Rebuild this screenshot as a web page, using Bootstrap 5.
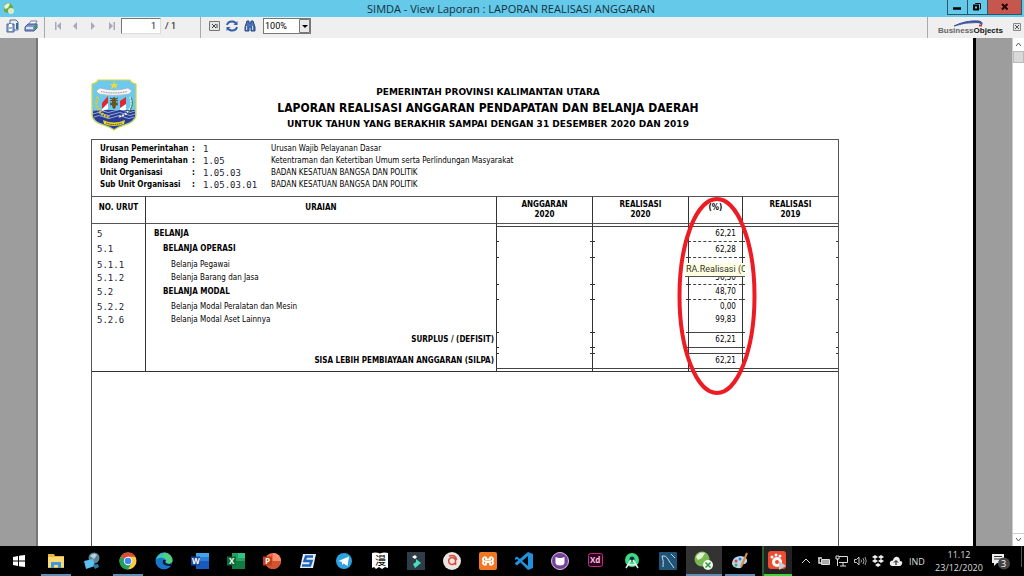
<!DOCTYPE html>
<html lang="id">
<head>
<meta charset="utf-8">
<meta name="viewport" content="width=device-width, initial-scale=1">
<title>SIMDA - View Laporan</title>
<link href="https://cdn.jsdelivr.net/npm/bootstrap@5.3.0/dist/css/bootstrap.min.css" rel="stylesheet">
<style>
body{font-family:"Open Sans","Noto Sans",sans-serif;background:#9d9d9d;color:#000;font-size:12px;line-height:16px}
button{border:0;background:none;padding:0}
svg{display:block}
.titlebar{height:17px;background:#65c9ea;color:#12303b}
.titlebar h1{font-size:11px;line-height:17px;margin:0;font-weight:400;padding-left:60px}
.win-btns{height:15px;border:1px solid #2b5868;border-top:0;margin-right:2px}
.win-btns button{width:20px;height:14px;border-right:1px solid #2b5868}
.win-btns .btn-x{width:33px;background:#c5574f;border-right:0}
.tools{height:21px;background:#efefef}
.tool-row{height:18px}
.vsep{width:1px;height:21px;background:#a9a9a9;align-self:flex-start}
.tools button{width:18px;height:18px}
.tools .btn-close-view{width:12px}
.page-input{width:40px;height:16px;border:1px solid #777;border-right-color:#ddd;border-bottom-color:#ddd;text-align:right;font:9px/14px Roboto,sans-serif;padding:0 4px;background:#fff;color:#223}
.tool-text{font:9px/16px Roboto,sans-serif}
.zoom-box{width:48px;height:16px}
.zoom-box select{display:block;width:48px;height:16px;appearance:none;border:1px solid #777;border-radius:0;font:9px/14px Roboto,sans-serif;padding:0 1px;background:#fff;color:#000}
.zoom-box svg{position:absolute;right:1px;top:1px;pointer-events:none}
.gutter-l{width:38px;border-right:2px solid #777;background:#9d9d9d}
.gutter-r{width:39px;border-left:3px solid #000;background:#9d9d9d}
.vscroll{width:12px;background:#fff;border-left:1px solid #ccc}
.vscroll .thumb{height:12px;background:#d9d9d9;border:1px solid #bbb}
.vscroll button{height:13px;width:100%}
.sheet{background:#fff;padding:41px 134px 0 53px;font-family:"DejaVu Sans Condensed","DejaVu Sans",sans-serif}
.report-head{height:60px}
.crest{width:46px}
.head-text{padding-top:5px;font-weight:700;line-height:16px}
.head-s{font-family:"DejaVu Sans",sans-serif;font-size:9px}
.head-l{font-size:12px}
.frame{border:1px solid #555;border-bottom:0}
.info{height:56px;padding:3px 0 0 8px;font-size:8px}
.info th,.info td{height:12px;line-height:12px;padding:0;white-space:nowrap;vertical-align:top}
.code{font-family:"DejaVu Sans Mono",monospace;font-size:9px;color:#223}
.ledger{width:100%;table-layout:fixed;border-collapse:separate;border-spacing:0;font-size:8px;line-height:10px}
.ledger th,.ledger td{padding:0;border-left:1px solid #333;vertical-align:middle}
.ledger th:first-child,.ledger td:first-child{border-left:0;padding-left:5px}
.ledger thead th{height:28px;border-top:1px solid #555;border-bottom:1px solid #555;text-align:center;vertical-align:top;padding-top:3px}
.ledger thead .one-line{padding:6px 0 0}
.ledger td.num{text-align:right;padding-right:6px}
.ledger td.sum{text-align:right;font-weight:700;padding-right:2px}
.ledger .h2r{height:2px;line-height:1px;font-size:1px}
.ledger .h4r{height:4px;line-height:1px;font-size:1px}
.ledger .h6r{height:6px;line-height:1px;font-size:1px}
.ledger .h12{height:12px}
.ledger .h15{height:15px}
.ledger .h16{height:16px}
.ledger td.lv1{padding-left:8px;font-weight:700}
.ledger td.lv2{padding-left:17px;font-weight:700}
.ledger td.lv3{padding-left:25px}
.ledger td.dash{border-top:1px dashed #444}
.ledger td.rule{border-top:1px solid #444}
.ledger td.tick{background:linear-gradient(#333,#333) left top/2px 1px no-repeat,linear-gradient(#333,#333) right top/2px 1px no-repeat}
.ledger tbody tr:last-child td{border-bottom:1px solid #333}
.ring{position:absolute;left:-13px;top:-1px;z-index:3;pointer-events:none}
.tip{position:absolute;left:-4px;top:-9px;width:60px;height:14px;padding-left:1px;overflow:hidden;background:#ffffe1;border-bottom:1px solid #555;font:9px/13px Roboto,sans-serif;white-space:nowrap;text-align:left;z-index:2;color:#333}
.taskbar{height:30px;background:#000;color:#ddd}
.app{width:36px;height:30px;position:relative;display:flex;flex-shrink:0;align-items:center;justify-content:center}
.app.start{width:38px}
.app.run::after{content:"";position:absolute;left:3px;right:3px;bottom:0;height:2px;background:#5c8db5}
.app.front{background:#333}
.app.front::after{left:0;right:0}
.app.rec{background:#222;border-left:2px solid #275d27;width:30px;margin-left:4px}
.app.rec::after{left:0;right:0;background:#3fd136}
.tray{font-size:9px;line-height:13px;padding-right:2px}
.tray button{height:30px;display:flex;align-items:center;justify-content:center;color:#ddd}
.t18{width:18px}
.clock{width:60px;text-align:center}
.note{width:24px}
</style>
</head>
<body class="vh-100 d-flex flex-column overflow-hidden">
<header class="titlebar d-flex justify-content-between flex-shrink-0">
  <svg class="ms-1" width="11" height="17" viewBox="0 0 11 17"><circle cx="4" cy="8" r="5" fill="#6da84b"/><path d="M0 6Q3 2 6 4L4 8 1 9Z" fill="#e8f5d0"/><circle cx="7" cy="11" r="3" fill="#d7eec9"/></svg>
  <h1 class="flex-fill text-center">SIMDA - View Laporan : LAPORAN REALISASI ANGGARAN</h1>
  <div class="win-btns d-flex">
    <button aria-label="Minimize"><svg width="19" height="14"><path d="M5 8.500H13" stroke="#000" stroke-width="2.500"/></svg></button>
    <button aria-label="Restore"><svg width="19" height="14" fill="none" stroke="#000"><path d="M7.500 4V3.500H12.500V9H11.500" stroke-width="1"/><path d="M6 5.500h4v4H6z" stroke-width="2"/></svg></button>
    <button class="btn-x" aria-label="Close"><svg width="33" height="14"><path d="M14 4L19.500 9.500M19.500 4L14 9.500" stroke="#200" stroke-width="2"/></svg></button>
  </div>
</header>
<nav class="tools flex-shrink-0" aria-label="Laporan">
 <div class="tool-row d-flex align-items-center">
  <button class="ms-1" aria-label="Export"><svg width="18" height="18" viewBox="0 0 18 18"><path d="M6 3h6l2 2v8H6z" fill="#e9effa" stroke="#5a6c90"/><path d="M3 7h7v8H3z" fill="#9db5dc" stroke="#43608f"/><path d="M5 7h3v3H5zM5 12h3v2H5z" fill="#fff"/><path d="M12 6h2v6h-2z" fill="#2f6f9c"/></svg></button>
  <button aria-label="Print"><svg width="18" height="18" viewBox="0 0 18 18"><path d="M6 8l3-4h6l-2 4z" fill="#fff" stroke="#6d7fae"/><path d="M3 10l3-3h9v4l-3 3H3z" fill="#7e95cf" stroke="#42568f"/><path d="M4 10h7v2H4z" fill="#dfe6f6"/><path d="M12 9l2-1v3l-2 2z" fill="#36a34e"/></svg></button>
  <span class="vsep ms-1"></span>
  <button class="ms-1" aria-label="First page"><svg width="18" height="18" fill="#a7a7bd"><path d="M6 5h1.500v8H6zM12 5v8L8 9z"/></svg></button>
  <button aria-label="Previous page"><svg width="18" height="18" fill="#a7a7bd"><path d="M10 5v8L6 9z"/></svg></button>
  <button aria-label="Next page"><svg width="18" height="18" fill="#a7a7bd"><path d="M6 5v8l4-4z"/></svg></button>
  <button aria-label="Last page"><svg width="18" height="18" fill="#a7a7bd"><path d="M6 5v8l4-4zM10.500 5H12v8h-1.500z"/></svg></button>
  <input id="pg" class="page-input" aria-label="Halaman" value="1">
  <label for="pg" class="tool-text ms-1">/ 1</label>
  <span class="vsep ms-4"></span>
  <button class="ms-1" aria-label="Stop"><svg width="18" height="18" fill="none"><path d="M4.500 4.500h10v9h-10z" fill="#e4e4e4" stroke="#777"/><path d="M7 7l4 4M11 7l-4 4M12 7v4" stroke="#444"/></svg></button>
  <button aria-label="Refresh"><svg width="18" height="18" fill="none" stroke="#365fa5" stroke-width="2"><path d="M4 8Q5 4 10 4.500L13 6M14 10Q13 14 8 13.500L5 12"/><path d="M14.500 4v4h-4zM3.500 14v-4h4z" fill="#365fa5" stroke="none"/></svg></button>
  <button aria-label="Search"><svg width="18" height="18" viewBox="0 0 18 18"><path d="M6 4h2v2h2V4h2l2 6v4h-4v-4H8v4H4v-4z" fill="#4f73b3" stroke="#244a89"/><path d="M5.500 9v4M11.500 9v4" stroke="#c3d6f4"/></svg></button>
  <div class="zoom-box position-relative ms-1"><select aria-label="Zoom"><option>100%</option></select><svg width="11" height="14"><path d="M.5 .5h10v13H.5z" fill="#e9e9e9" stroke="#777"/><path d="M3 6h6L6 9z"/></svg></div>
  <div class="ms-auto d-flex align-items-center align-self-stretch">
    <span class="vsep"></span>
    <svg class="ms-2" width="68" height="18" viewBox="0 2 68 18" role="img" aria-label="BusinessObjects"><path d="M18 11Q30 5 43 6Q48 7 45 11Q47 8 41 7.500Q29 7 18 11Z" fill="#3b56a0" stroke="#3b56a0"/><path d="M43 10.500h3" stroke="#d33" stroke-width="2"/><text x="2" y="18" font-family="Liberation Sans" font-weight="700" font-size="8" fill="#666">Business<tspan fill="#111">Objects</tspan></text></svg>
    <button class="btn-close-view ms-2" aria-label="Close view"><svg width="12" height="18" fill="none"><path d="M1.500 6.500h7v7h-7z" fill="#e4e4e4" stroke="#888"/><path d="M3 8l4 4M7 8l-4 4" stroke="#555"/></svg></button>
  </div>
 </div>
</nav>
<main class="d-flex flex-fill overflow-hidden">
  <div class="gutter-l flex-shrink-0"></div>
  <section class="sheet flex-fill d-flex flex-column">
    <div class="report-head d-flex flex-shrink-0">
      <svg class="crest" height="54" viewBox="0 0 46 54" role="img" aria-label="Kalimantan Utara"><path d="M7 1H39Q40 4 45 5V37Q44 43 34 46Q27 48 23 51Q19 48 12 46Q2 43 1 37V5Q6 4 7 1Z" fill="#6cc9ef" stroke="#d8d437" stroke-width="1.200"/><path d="M2 31H44V37Q43 42 34 45Q27 47 23 50Q19 47 12 45Q3 42 2 37Z" fill="#2b3a92"/><path d="M2 32q5-3 10 0t11 0 11 0 10 0M2 35q5-3 10 0t11 0 11 0 10 0M3 38q5-3 10 0t10 0 10 0 10 0" fill="none" stroke="#a9c4ec" stroke-width=".8"/><path d="M23 2l1 3h3l-2 2 1 3-3-2-3 2 1-3-2-2h3z" fill="#f0d930"/><path d="M5 12L9 9Q23 13 37 9L41 12 38 15Q23 18 8 15Z" fill="#f6f6f6" stroke="#99a" stroke-width=".5"/><path d="M10 12.500Q23 15.500 36 12.500" fill="none" stroke="#777" stroke-dasharray="1 .7"/><path d="M7 18Q3 26 10 34Q14 38 19 38" fill="none" stroke="#d6c93b" stroke-width="3" stroke-dasharray="2 1"/><path d="M39 18Q43 26 36 34Q32 37 27 38" fill="none" stroke="#e9efe0" stroke-width="2" stroke-dasharray="2 1"/><path d="M40 18Q44 26 37 34" fill="none" stroke="#388350"/><path d="M11 24l6-7v8l-6 6zM29 22l6-4v8l-6 4z" fill="#e02733"/><path d="M11 30l6-6v6l-6 2zM29 29l6-4v6h-6z" fill="#fff"/><path d="M19 19l8 3M27 19l-8 3M19 26l8-2M19 24l8 2" stroke="#55421c"/><ellipse cx="23" cy="24" rx="2.200" ry="6" fill="#6b541c"/><path d="M12 41Q23 46 34 41L33 45Q23 49 13 45Z" fill="#e9d72d"/><path d="M15 44Q23 47 31 44" fill="none" stroke="#443" stroke-dasharray="1.500 .7"/></svg>
      <div class="head-text flex-fill text-center">
        <div class="head-s">PEMERINTAH PROVINSI KALIMANTAN UTARA</div>
        <div class="head-l">LAPORAN REALISASI ANGGARAN PENDAPATAN DAN BELANJA DAERAH</div>
        <div class="head-s">UNTUK TAHUN YANG BERAKHIR SAMPAI DENGAN 31 DESEMBER 2020 DAN 2019</div>
      </div>
    </div>
    <div class="frame flex-fill">
      <div class="info">
        <table>
          <colgroup><col style="width:92px"><col style="width:11px"><col style="width:68px"><col></colgroup>
          <tr><th>Urusan Pemerintahan</th><th>:</th><td class="code">1</td><td>Urusan Wajib Pelayanan Dasar</td></tr>
          <tr><th>Bidang Pemerintahan</th><th>:</th><td class="code">1.05</td><td>Ketentraman dan Ketertiban Umum serta Perlindungan Masyarakat</td></tr>
          <tr><th>Unit Organisasi</th><th>:</th><td class="code">1.05.03</td><td>BADAN KESATUAN BANGSA DAN POLITIK</td></tr>
          <tr><th>Sub Unit Organisasi</th><th>:</th><td class="code">1.05.03.01</td><td>BADAN KESATUAN BANGSA DAN POLITIK</td></tr>
        </table>
      </div>
      <table class="ledger">
        <colgroup><col style="width:53px"><col><col style="width:96px"><col style="width:96px"><col style="width:54px"><col style="width:96px"></colgroup>
        <thead><tr><th class="one-line">NO. URUT</th><th class="one-line">URAIAN</th><th>ANGGARAN<br>2020</th><th>REALISASI<br>2020</th><th class="one-line position-relative">(%)<svg class="ring" width="82" height="200"><ellipse cx="41" cy="100" rx="37.500" ry="97" fill="none" stroke="#ed1c24" stroke-width="4"/></svg></th><th>REALISASI<br>2019</th></tr></thead>
        <tbody>
          <tr><td class="h2r"></td><td></td><td></td><td></td><td></td><td></td></tr>
          <tr><td class="code h15">5</td><td class="lv1">BELANJA</td><td class="rule"></td><td class="rule"></td><td class="rule num">62,21</td><td class="rule"></td></tr>
          <tr><td class="code h16">5.1</td><td class="lv2">BELANJA OPERASI</td><td class="tick"></td><td class="tick"></td><td class="dash num">62,28</td><td class="tick"></td></tr>
          <tr><td class="code h15">5.1.1</td><td class="lv3">Belanja Pegawai</td><td class="tick"></td><td class="tick"></td><td class="dash num"></td><td class="tick"></td></tr>
          <tr><td class="code h12">5.1.2</td><td class="lv3">Belanja Barang dan Jasa</td><td></td><td></td><td class="num position-relative">56,50<span class="tip">RA.Realisasi (C</span></td><td></td></tr>
          <tr><td class="code h15">5.2</td><td class="lv2">BELANJA MODAL</td><td class="tick"></td><td class="tick"></td><td class="dash num">48,70</td><td class="tick"></td></tr>
          <tr><td class="code h15">5.2.2</td><td class="lv3">Belanja Modal Peralatan dan Mesin</td><td class="tick"></td><td class="tick"></td><td class="dash num">0,00</td><td class="tick"></td></tr>
          <tr><td class="code h12">5.2.6</td><td class="lv3">Belanja Modal Aset Lainnya</td><td></td><td></td><td class="num">99,83</td><td></td></tr>
          <tr><td class="h6r"></td><td></td><td></td><td></td><td></td><td></td></tr>
          <tr><td class="h15"></td><td class="sum">SURPLUS / (DEFISIT)</td><td class="tick"></td><td class="tick"></td><td class="rule num">62,21</td><td class="tick"></td></tr>
          <tr><td class="h6r"></td><td></td><td class="tick"></td><td class="tick"></td><td class="rule"></td><td class="tick"></td></tr>
          <tr><td class="h15"></td><td class="sum">SISA LEBIH PEMBIAYAAN ANGGARAN (SILPA)</td><td class="tick"></td><td class="tick"></td><td class="rule num">62,21</td><td class="tick"></td></tr>
          <tr><td class="h4r"></td><td></td><td class="rule"></td><td class="rule"></td><td class="rule"></td><td class="rule"></td></tr>
        </tbody>
      </table>
    </div>
  </section>
  <div class="gutter-r flex-shrink-0"></div>
  <div class="vscroll flex-shrink-0 d-flex flex-column">
    <button aria-label="Scroll up"><svg width="11" height="13" fill="none"><path d="M3 8l2.500-3L8 8" stroke="#555"/></svg></button>
    <div class="thumb"></div>
    <button class="mt-auto" aria-label="Scroll down"><svg width="11" height="13" fill="none"><path d="M0 .5h11" stroke="#ccc"/><path d="M3 5l2.500 3L8 5" stroke="#555"/></svg></button>
  </div>
</main>
<footer class="taskbar d-flex flex-shrink-0">
  <button class="app start" aria-label="Start"><svg width="12" height="12" fill="#fff"><path d="M0 2l5-1v4.500H0zM6 .8L12 0v5.500H6zM0 6.500h5V11l-5-1zM6 6.500h6V12l-6-.8z"/></svg></button>
  <button class="app run" aria-label="File Explorer"><svg width="18" height="18"><path d="M1 2h6l1 2h9v12H1z" fill="#e9b53a"/><path d="M1 5h16v10H1z" fill="#fbd974"/><path d="M4 10h10v6h-3v-3H7v3H4z" fill="#3d9bdc"/></svg></button>
  <button class="app" aria-label="Remote"><svg width="18" height="18"><circle cx="11" cy="6" r="5.500" fill="#5d8296"/><path d="M7 4Q11 0 14 3L11 7Z" fill="#b2d2dc"/><path d="M1 9l9-2 2 7-9 3z" fill="#5cc0f1"/><path d="M10 13l5-1 1 3-4 2z" fill="#2c78a7"/></svg></button>
  <button class="app run" aria-label="Chrome"><svg width="18" height="18" viewBox="0 0 18 18"><circle cx="9" cy="9" r="8.500" fill="#f9cd3d"/><path d="M9 9L1.600 4.700A8.500 8.500 0 0 1 16.400 4.700H9z" fill="#db4a3b"/><path d="M1.600 4.700A8.500 8.500 0 0 0 9 17.500L12.500 11 9 9z" fill="#23a05b"/><circle cx="9" cy="9" r="4.200" fill="#fff"/><circle cx="9" cy="9" r="3.300" fill="#4286f5"/></svg></button>
  <button class="app" aria-label="Edge"><svg width="18" height="18"><circle cx="9" cy="9" r="8.500" fill="#1776cb"/><path d="M1 8Q3 .5 10 .5Q17.500 2 17.500 9Q16 13 11 11Q12 7 8 6Q3 5 1 8Z" fill="#3ac6b4"/><path d="M10 .5Q18 3 17.500 9Q16 13 11 11Q13 6 7 5Z" fill="#65d65b" opacity=".6"/><path d="M8 8Q6 14 16 14L17 11Q14 13 11 11Q9 10 11 8Z" fill="#041b35"/></svg></button>
  <button class="app" aria-label="Word"><svg width="18" height="18"><path d="M5 1h13v4H5z" fill="#41a5ee"/><path d="M5 5h13v4H5z" fill="#2b7cd3"/><path d="M5 9h13v8H5z" fill="#185abd"/><path d="M0 4.500h9v9H0z" fill="#1549a0"/><text x="1" y="12" font-size="8" font-weight="700" fill="#fff">W</text></svg></button>
  <button class="app" aria-label="Excel"><svg width="18" height="18"><path d="M5 1h13v16H5z" fill="#21a366"/><path d="M11 1h7v5h-7z" fill="#33c481"/><path d="M5 9h13v8H5z" fill="#107c41"/><path d="M0 4.500h9v9H0z" fill="#0e6b39"/><text x="2" y="12" font-size="8" font-weight="700" fill="#fff">X</text></svg></button>
  <button class="app" aria-label="PowerPoint"><svg width="18" height="18"><circle cx="10" cy="9" r="8" fill="#ed6c47"/><path d="M10 1A8 8 0 0 1 18 9H10z" fill="#ff8f6b"/><path d="M2 9h16A8 8 0 0 1 2 9z" fill="#d35230"/><path d="M0 4.500h9v9H0z" fill="#c43e1c"/><text x="2" y="12" font-size="8" font-weight="700" fill="#fff">P</text></svg></button>
  <button class="app" aria-label="S app"><svg width="18" height="18"><path d="M4 2h13l-3 14H1z" fill="#e5edf5"/><path d="M14 4.500H7L5.500 9h7L11 13.500H3" fill="none" stroke="#1e64bd" stroke-width="2.500"/></svg></button>
  <button class="app" aria-label="Telegram"><svg width="18" height="18"><circle cx="9" cy="9" r="8" fill="#2da2dd"/><path d="M3.500 9L14 4.500 12.500 14 8.500 11.500 7 13V10z" fill="#fff"/></svg></button>
  <button class="app" aria-label="Comic"><svg width="18" height="18"><path d="M1 1Q5 0 9 1.500Q13 0 17 1V16L14 15 11 17 8 15 5 17 3 15 1 16Z" fill="#fff"/><text x="4" y="13" font-family="Noto Sans CJK SC" font-size="11">漫</text></svg></button>
  <button class="app" aria-label="Filmora"><svg width="18" height="18"><path d="M0 0h18v18H0z" fill="#2f3d48"/><path d="M8 3l2 2-2 2-3-2z" fill="#fff"/><path d="M9 7l5 4-6 5-2-4 3-2z" fill="#45dfb8"/></svg></button>
  <button class="app" aria-label="G app"><svg width="18" height="18" fill="none"><circle cx="9" cy="9" r="9" fill="#e8e5e2"/><path d="M12.500 10A3.500 3.500 0 1 1 12.500 8V13M6 4Q13 2 13.500 8" stroke="#dd4a3a" stroke-width="1.500"/></svg></button>
  <button class="app" aria-label="XAMPP"><svg width="18" height="18" fill="none"><rect width="18" height="18" rx="2" fill="#f37623"/><path d="M7 7.500V5.500A2 2 0 1 0 5 9A2 2 0 1 0 7 12.500V10H11V12.500A2 2 0 1 0 13 9A2 2 0 1 0 11 5.500V7.500Z" stroke="#fff" stroke-width="1.800"/></svg></button>
  <button class="app" aria-label="VS Code"><svg width="18" height="18"><path d="M13 0l5 2v14l-5 2L2 7l-2 1V6l2-1.500L13 14V4L2 13.500 0 12v-1z" fill="#2190df"/></svg></button>
  <button class="app" aria-label="GitHub"><svg width="18" height="18"><circle cx="9" cy="9" r="8.500" fill="#74409b" stroke="#d7c5e4"/><path d="M4.500 5l3 1h3l3-1v6Q13 13.500 9 13.500T4.500 11z" fill="#fff"/></svg></button>
  <button class="app" aria-label="Adobe XD"><svg width="18" height="18"><rect x="1.500" y="1.500" width="14" height="13" rx="2" fill="#2e001f" stroke="#c32a80"/><text x="3" y="11" font-size="8" font-weight="700" fill="#ffc0e6">Xd</text></svg></button>
  <button class="app" aria-label="Android Studio"><svg width="18" height="18"><circle cx="9" cy="8" r="7" fill="#3ddc84"/><circle cx="9" cy="7" r="2.500" fill="#073042"/><path d="M8 8l-5 8M10 8l5 8M5 12q4 2 8 0" fill="none" stroke="#e5f1ea" stroke-width="1.500"/></svg></button>
  <button class="app" aria-label="MySQL Workbench"><svg width="18" height="18" fill="none"><rect width="18" height="18" rx="1" fill="#1f5478"/><path d="M4 15Q5 9 3 4Q7 3 9 7T13 13L15 16M12 2l4 4" stroke="#c8d8e3"/></svg></button>
  <button class="app run front" aria-label="SIMDA"><svg width="20" height="20"><circle cx="8" cy="8" r="7.500" fill="#79b955"/><path d="M2 6Q5 0 11 2L8 7 4 9Z" fill="#e3f1d3"/><circle cx="14" cy="14" r="5" fill="#f3fbef"/><path d="M11.500 11.500l5 5M16.500 11.500l-5 5" stroke="#299a35" stroke-width="1.500"/></svg></button>
  <button class="app run" aria-label="Paint"><svg width="18" height="18"><path d="M1 11Q2 4 10 4Q17 5 16 10Q14 13 11 12Q12 17 6 16Q1 15 1 11Z" fill="#b8d7ea"/><circle cx="5" cy="9" r="1.500" fill="#d44"/><circle cx="9" cy="7" r="1.500" fill="#3a7bd0"/><circle cx="5" cy="13" r="1.500" fill="#46a25c"/><path d="M16 1L10 15" stroke="#d98b37" stroke-width="2"/></svg></button>
  <button class="app run rec" aria-label="Recorder"><svg width="20" height="20"><rect width="18" height="18" rx="3" fill="#ed4b32"/><circle cx="9" cy="11" r="5" fill="#fff"/><circle cx="9" cy="11" r="2" fill="#ed4b32"/><g fill="#fff"><circle cx="4" cy="6" r="1.500"/><circle cx="8" cy="4" r="1.500"/><circle cx="12" cy="5" r="1.500"/></g><path d="M11 10l7 5-7 4z" fill="#ccc"/></svg></button>
  <div class="tray d-flex ms-auto flex-shrink-0">
    <button class="t18" aria-label="Show hidden icons"><svg width="12" height="12" fill="none"><path d="M2 8l4-4 4 4" stroke="#ddd"/></svg></button>
    <button class="t18" aria-label="Battery"><svg width="14" height="12" fill="none" stroke="#ddd"><path d="M4.500 4.500h8v5h-8z" fill="#aaa"/><path d="M1 3h4M2 3v5h3" stroke-width="1.500"/></svg></button>
    <button class="t18" aria-label="Network"><svg width="14" height="12" fill="none" stroke="#ddd"><path d="M4 1.500h8.500v6H4M8 8v3M5 11h6M1 1h3v3H1zM2.500 4v7"/></svg></button>
    <button class="t18" aria-label="Volume"><svg width="14" height="12" fill="none" stroke="#ccc"><path d="M1.500 4.500h2L6 2v8L3.500 7.500h-2z"/><path d="M8 4.500q1 1.500 0 3M10 3q2 3 0 6M12 2q2.500 4 0 8" stroke="#999"/></svg></button>
    <button class="t18" aria-label="Dropbox"><svg width="14" height="12" fill="#eee"><path d="M4 0l3 2-3 2-3-2zM10 0l3 2-3 2-3-2zM4 4l3 2-3 2-3-2zM10 4l3 2-3 2-3-2zM7 8l3 2-3 2-3-2z"/></svg></button>
    <button class="t18" aria-label="Cloud"><svg width="14" height="12"><path d="M3 11Q0 10 1 7Q2 5 4 5.500Q5 1 9 2Q11 3 11 6Q14 6 13 9Q12 11 11 11Z" fill="#eee"/><path d="M7 10V6M5 7.500L7 5.500 9 7.500" stroke="#000" fill="none"/></svg></button>
    <button class="note" aria-label="Bahasa">IND</button>
    <button class="clock" aria-label="Jam"><span>11.12<br>23/12/2020</span></button>
    <button class="note" aria-label="Notifikasi"><svg width="20" height="20"><path d="M1 3h12v9H6l-3 3v-3H1z" fill="#eee"/><path d="M3 5.500h8M3 8h8" stroke="#333"/><circle cx="13" cy="12.500" r="6" fill="#444"/><text x="10" y="16" font-size="9" fill="#fff">3</text></svg></button>
    <span class="vsep ms-2 opacity-50"></span>
  </div>
</footer>
<script src="https://cdn.jsdelivr.net/npm/bootstrap@5.3.0/dist/js/bootstrap.bundle.min.js"></script>
</body>
</html>
